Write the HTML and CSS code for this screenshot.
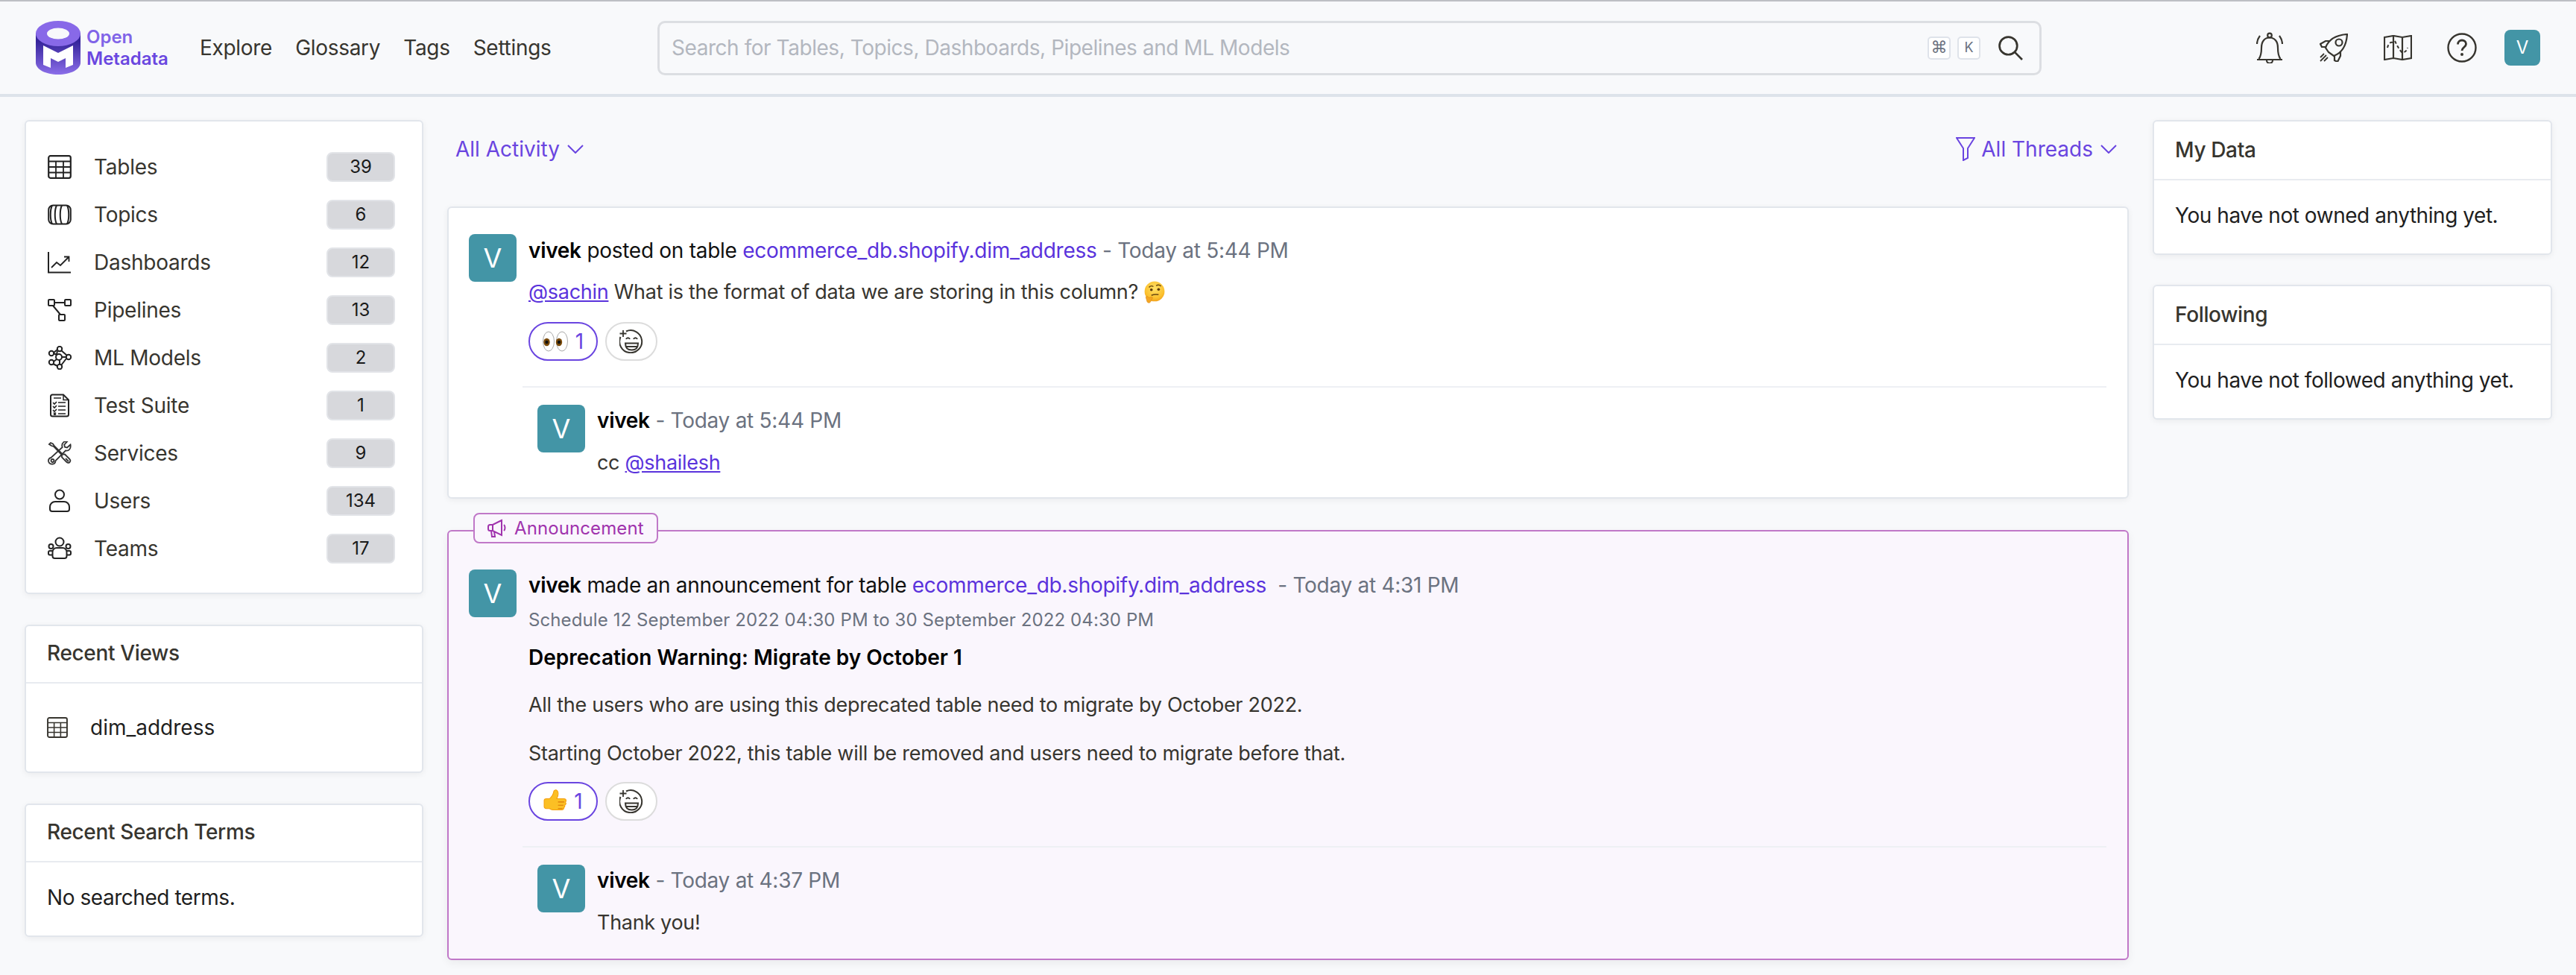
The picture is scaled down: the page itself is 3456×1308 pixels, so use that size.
FILE: index.html
```html
<!DOCTYPE html>
<html lang="en">
<head>
    <meta charset="UTF-8">
    <meta name="viewport" content="width=device-width, initial-scale=1.0">
    <title>OpenMetadata</title>
    <link rel="stylesheet" href="styles.css">
</head>
<body>
    <svg class="sprites" width="0" height="0" aria-hidden="true">
        <defs>
            <linearGradient id="logoBody" x1="0" y1="0" x2="0" y2="1">
                <stop offset="0.2" stop-color="#35249a"/>
                <stop offset="1" stop-color="#8b6ee9"/>
            </linearGradient>
            <radialGradient id="thinkFace" cx="0.5" cy="0.35" r="0.7">
                <stop offset="0" stop-color="#ffe066"/>
                <stop offset="0.7" stop-color="#fbc02d"/>
                <stop offset="1" stop-color="#ef9a1a"/>
            </radialGradient>
        </defs>
        <symbol id="i-table" viewBox="0 0 32 32">
            <rect x="1.2" y="1.2" width="29.6" height="29.6" rx="2.5" fill="none" stroke="currentColor" stroke-width="2.2"/>
            <path d="M1 8.5h30M1 16h30M1 23.5h30M11 8.5v22M21 8.5v22" fill="none" stroke="currentColor" stroke-width="1.8"/>
        </symbol>
        <symbol id="i-topic" viewBox="0 0 32 32">
            <rect x="1.2" y="3.5" width="29.6" height="25" rx="6" fill="none" stroke="currentColor" stroke-width="2"/>
            <path d="M6 3.5c-3 6-3 19 0 25M12 3.5c-3 6-3 19 0 25M19 3.5c-3 6-3 19 0 25M26 3.5c3 6 3 19 0 25" fill="none" stroke="currentColor" stroke-width="2"/>
        </symbol>
        <symbol id="i-dash" viewBox="0 0 32 32">
            <path d="M1 2v27.5h30" fill="none" stroke="currentColor" stroke-width="2"/>
            <path d="M5 23l7-7 5 4 11-11M22 8.5h6.5V15" fill="none" stroke="currentColor" stroke-width="1.8"/>
        </symbol>
        <symbol id="i-pipe" viewBox="0 0 32 32">
            <g fill="none" stroke="currentColor" stroke-width="2">
                <rect x="1" y="2" width="8" height="8" rx="1"/>
                <rect x="23" y="2" width="8" height="8" rx="1"/>
                <rect x="15" y="22" width="8" height="8" rx="1"/>
                <path d="M9 6h14M7 10l10 12"/>
            </g>
        </symbol>
        <symbol id="i-ml" viewBox="0 0 32 32">
            <g fill="none" stroke="currentColor" stroke-width="2">
                <circle cx="16" cy="4" r="3.2"/>
                <circle cx="5" cy="10" r="3.2"/>
                <circle cx="28" cy="15" r="3.2"/>
                <circle cx="5" cy="22" r="3.2"/>
                <circle cx="16" cy="28" r="3.2"/>
                <circle cx="15" cy="15" r="4"/>
                <path d="M8 10l4 2M18 6l8 7M18 15h7M8 21l4-3M16 25v-6M25 17l-7 9M13 7l-1 4M8 9l5-4M7 24l6 3"/>
            </g>
        </symbol>
        <symbol id="i-test" viewBox="0 0 32 32">
            <path d="M6 1.5h15l7 7V28a2.5 2.5 0 0 1-2.5 2.5h-19A2.5 2.5 0 0 1 4 28V4a2.5 2.5 0 0 1 2-2.5z" fill="none" stroke="currentColor" stroke-width="2"/>
            <path d="M21 1.5v7h7" fill="none" stroke="currentColor" stroke-width="1.5"/>
            <path d="M8 6h10M14 12h10M14 17h10M14 22h10M14 27h10M7 12l2 2 3-3M7 17l2 2 3-3M7 22l2 2 3-3M8 25.5l3 3M11 25.5l-3 3" fill="none" stroke="currentColor" stroke-width="1.6"/>
        </symbol>
        <symbol id="i-service" viewBox="0 0 32 32">
            <g fill="none" stroke="#333" stroke-width="1.8">
                <path d="M2 4l2-2 3 1.5 2 3 11 11 3 0 6 6c1.5 1.5 1.5 3.5.5 4.5s-3 1-4.5-.5l-6-6 0-3L8 7 5 6z"/>
                <path d="M24 23l4 4"/>
                <path d="M30.5 4.5l-4.5 4-3-.8-.8-3 4-4.5c-3.5-.8-7 1.5-7 5.5 0 1 .2 1.5.5 2.2L4.5 22c-3 .5-4 3-3.3 5.5 1 2.5 3.5 3.5 6 3 2-.5 3.300-2.5 3.300-4.5l13.5-13.5c4.5 1 7.5-3 6.5-8z"/>
                <circle cx="6.5" cy="26" r="2"/>
            </g>
        </symbol>
        <symbol id="i-user" viewBox="0 0 32 32">
            <circle cx="16" cy="7.5" r="6" fill="none" stroke="currentColor" stroke-width="2"/>
            <path d="M10 17h12a7 7 0 0 1 7 7v3a3 3 0 0 1-3 3H6a3 3 0 0 1-3-3v-3a7 7 0 0 1 7-7z" fill="none" stroke="currentColor" stroke-width="2"/>
        </symbol>
        <symbol id="i-team" viewBox="0 0 32 32">
            <g fill="none" stroke="currentColor" stroke-width="2">
                <circle cx="16" cy="7" r="5.5"/>
                <circle cx="4.5" cy="13" r="3"/>
                <circle cx="27.5" cy="13" r="3"/>
                <path d="M12 15h8a5.5 5.5 0 0 1 5.5 5.5V26a3 3 0 0 1-3 3h-13a3 3 0 0 1-3-3v-5.5A5.5 5.5 0 0 1 12 15z"/>
                <path d="M6.500 19H3a2 2 0 0 0-2 2v1.5a2 2 0 0 0 2 2h3.500M25.500 19H29a2 2 0 0 1 2 2v1.5a2 2 0 0 1-2 2h-3.500"/>
            </g>
        </symbol>
        <symbol id="i-addreact" viewBox="0 0 32 32">
            <g fill="none" stroke="#37352f" stroke-width="2">
                <path d="M9 2.5A15 15 0 1 1 1.5 10"/>
                <path d="M5 1v9M.5 5.5h9" stroke-width="1.8"/>
                <path d="M8 18.5h17c0 6-3.5 9-8.500 9S8 24.5 8 18.5zM8.500 23h16"/>
                <path d="M9 13c1-2.500 4-2.500 5 0M19 13c1-2.500 4-2.500 5 0"/>
            </g>
        </symbol>
    </svg>

    <header class="topbar">
        <div class="brand">
            <svg class="brand-logo" viewBox="0 0 60 72">
                <path d="M0 16V56C0 65 13 72 30 72S60 65 60 56V16Z" fill="url(#logoBody)"/>
                <ellipse cx="30" cy="17" rx="30" ry="17" fill="#8869e8"/>
                <ellipse cx="30" cy="17" rx="15" ry="7.5" fill="#f8f9fb"/>
                <path d="M10 33L30 43 50 33V59L40 63V50L30 55 20 50V63L10 59Z" fill="#fff"/>
            </svg>
            <div class="brand-name"><span class="brand-open">Open</span><span>Metadata</span></div>
        </div>
        <nav class="mainnav">
            <a>Explore</a>
            <a>Glossary</a>
            <a>Tags</a>
            <a>Settings</a>
        </nav>
        <div class="searchbox">
            <span class="search-hint">Search for Tables, Topics, Dashboards, Pipelines and ML Models</span>
            <kbd class="key key-cmd">⌘</kbd>
            <kbd class="key">K</kbd>
            <svg class="search-icon" viewBox="0 0 32 32"><circle cx="13" cy="13" r="11.5" fill="none" stroke="#37352f" stroke-width="2.6"/><path d="M21.5 21.5L31 31" stroke="#37352f" stroke-width="2.6"/></svg>
        </div>
        <div class="toolicons">
            <svg class="tool-bell" viewBox="0 0 36 42" fill="none" stroke="#37352f" stroke-width="2.2">
                <path d="M1 37h34M3.5 36c3-4 3.5-8 3.5-15C7 13 11 7.5 18 7.5S29 13 29 21c0 7 .5 11 3.5 15"/>
                <circle cx="18" cy="4.5" r="2.8"/>
                <path d="M14 38c0 5 8 5 8 0M1 16c0-4 1-7 4-11M35 16c0-4-1-7-4-11"/>
            </svg>
            <svg class="tool-rocket" viewBox="0 0 38 38" fill="none" stroke="#37352f" stroke-width="2.2">
                <path d="M12 25L8 19C12 8 22 2 37 1 36 16 30 26 19 30z"/>
                <circle cx="26" cy="12" r="4.5"/>
                <path d="M9 18H3L1 14 8 10 13 10M20 30v6L24 38 28 30V25"/>
                <path d="M1 37l8-8M6 37l5-5M1 32l5-5" stroke-width="1.8"/>
            </svg>
            <svg class="tool-map" viewBox="0 0 38 34" fill="none" stroke="#37352f" stroke-width="2.2">
                <path d="M1 3L13 1 25 3 37 1V31L25 33 13 31 1 33ZM13 1V31M25 3V33"/>
                <path d="M5 17c1-5 4-8 7-7M15 8l3 6 3 5 3 4c3 1 7-1 8-6" stroke-width="2" stroke-dasharray="4 3"/>
            </svg>
            <svg class="tool-help" viewBox="0 0 40 40">
                <circle cx="20" cy="20" r="18.5" fill="none" stroke="#37352f" stroke-width="2.4"/>
                <path d="M14.5 15.5c0-3.500 2.5-5.500 5.500-5.500s5.500 2 5.500 5c0 4-5.500 4.500-5.500 9" fill="none" stroke="#37352f" stroke-width="2.8"/>
                <circle cx="20" cy="29" r="2" fill="#37352f"/>
            </svg>
            <span class="avatar avatar-small">V</span>
        </div>
    </header>

    <main class="layout">
        <aside class="col-left">
            <section class="card stats">
                <div class="stat"><svg class="stat-icon"><use href="#i-table"/></svg><span class="stat-name">Tables</span><span class="count">39</span></div>
                <div class="stat"><svg class="stat-icon"><use href="#i-topic"/></svg><span class="stat-name">Topics</span><span class="count">6</span></div>
                <div class="stat"><svg class="stat-icon"><use href="#i-dash"/></svg><span class="stat-name">Dashboards</span><span class="count">12</span></div>
                <div class="stat"><svg class="stat-icon"><use href="#i-pipe"/></svg><span class="stat-name">Pipelines</span><span class="count">13</span></div>
                <div class="stat"><svg class="stat-icon"><use href="#i-ml"/></svg><span class="stat-name">ML Models</span><span class="count">2</span></div>
                <div class="stat"><svg class="stat-icon"><use href="#i-test"/></svg><span class="stat-name">Test Suite</span><span class="count">1</span></div>
                <div class="stat"><svg class="stat-icon"><use href="#i-service"/></svg><span class="stat-name">Services</span><span class="count">9</span></div>
                <div class="stat"><svg class="stat-icon"><use href="#i-user"/></svg><span class="stat-name">Users</span><span class="count">134</span></div>
                <div class="stat"><svg class="stat-icon"><use href="#i-team"/></svg><span class="stat-name">Teams</span><span class="count">17</span></div>
            </section>
            <section class="card">
                <h3 class="card-title">Recent Views</h3>
                <div class="card-body recent-item"><svg class="recent-icon"><use href="#i-table"/></svg>dim_address</div>
            </section>
            <section class="card">
                <h3 class="card-title">Recent Search Terms</h3>
                <div class="card-body">No searched terms.</div>
            </section>
        </aside>

        <div class="col-feed">
            <div class="feed-filters">
                <a class="filter">All Activity <svg class="chevron" viewBox="0 0 22 12"><path d="M1 1l10 10L21 1" fill="none" stroke="currentColor" stroke-width="2"/></svg></a>
                <a class="filter">
                    <svg class="funnel" viewBox="0 0 26 32"><path d="M1 1h24L16 15v13l-6 3V15z" fill="none" stroke="currentColor" stroke-width="2"/></svg>
                    All Threads <svg class="chevron" viewBox="0 0 22 12"><path d="M1 1l10 10L21 1" fill="none" stroke="currentColor" stroke-width="2"/></svg>
                </a>
            </div>

            <article class="post">
                <span class="avatar">V</span>
                <div class="post-main">
                    <p class="post-title"><b>vivek</b> posted on table <a class="link">ecommerce_db.shopify.dim_address</a> <span class="muted">- Today at 5:44 PM</span></p>
                    <p class="post-text post-gap"><a class="mention">@sachin</a> What is the format of data we are storing in this column?
                        <svg class="emoji-think" viewBox="0 0 28 28">
                            <circle cx="14" cy="13" r="12.5" fill="url(#thinkFace)"/>
                            <path d="M7 8c1.5-2 4-2 5.5-1M16 6c2-1.5 4.5-1 6 .5" fill="none" stroke="#6b4a10" stroke-width="1.4"/>
                            <circle cx="10" cy="11" r="1.7" fill="#5b3a0c"/>
                            <circle cx="19" cy="10.5" r="1.7" fill="#5b3a0c"/>
                            <path d="M10 18c3-1.5 6-1.5 9-1" fill="none" stroke="#6b4a10" stroke-width="1.4"/>
                            <path d="M3 20c2-1.5 3 0 4 1l3-1c2 0 2 2 .5 2.5L9 26c-1 2-4 1.5-4.5-.5z" fill="#f5a623" stroke="#d98a13" stroke-width=".6"/>
                        </svg>
                    </p>
                    <div class="reactions">
                        <span class="reaction">
                            <svg class="emoji-eyes" viewBox="0 0 34 28">
                                <ellipse cx="8" cy="14" rx="7.5" ry="13" fill="#fff" stroke="#aaa" stroke-width="1"/>
                                <ellipse cx="26" cy="14" rx="7.5" ry="13" fill="#fff" stroke="#aaa" stroke-width="1"/>
                                <ellipse cx="5.5" cy="15" rx="4.2" ry="5.2" fill="#7a4a0a"/>
                                <ellipse cx="22" cy="15" rx="4.2" ry="5.2" fill="#7a4a0a"/>
                                <circle cx="5.5" cy="15" r="2.2" fill="#111"/>
                                <circle cx="22" cy="15" r="2.2" fill="#111"/>
                            </svg>
                            1
                        </span>
                        <span class="reaction-add"><svg class="addreact-icon"><use href="#i-addreact"/></svg></span>
                    </div>
                    <div class="reply">
                        <span class="avatar">V</span>
                        <div>
                            <p class="reply-title"><b>vivek</b> <span class="muted">- Today at 5:44 PM</span></p>
                            <p class="reply-text">cc <a class="mention">@shailesh</a></p>
                        </div>
                    </div>
                </div>
            </article>

            <article class="post post-announce">
                <span class="announce-tag">
                    <svg class="announce-icon" viewBox="0 0 26 26" fill="none" stroke="currentColor" stroke-width="2">
                        <path d="M19 2L7 8H3.5C2 8 1 9 1 10.5v3C1 15 2 16 3.5 16H7l12 6zM7 8v8M22 8c2 1.5 2 6.5 0 8M5 16l1 8h4l-1-7"/>
                    </svg>
                    Announcement
                </span>
                <span class="avatar">V</span>
                <div class="post-main">
                    <p class="post-title"><b>vivek</b> made an announcement for table <a class="link">ecommerce_db.shopify.dim_address</a> &nbsp;<span class="muted">- Today at 4:31 PM</span></p>
                    <p class="schedule">Schedule 12 September 2022 04:30 PM to 30 September 2022 04:30 PM</p>
                    <p class="announce-head">Deprecation Warning: Migrate by October 1</p>
                    <p class="post-text announce-p1">All the users who are using this deprecated table need to migrate by October 2022.</p>
                    <p class="post-text announce-p2">Starting October 2022, this table will be removed and users need to migrate before that.</p>
                    <div class="reactions reactions-tight">
                        <span class="reaction">
                            <svg class="emoji-thumb" viewBox="0 0 30 36" preserveAspectRatio="none">
                                <path d="M1 17c0-2 1.5-3 3-3h4c3-3 5-7 5.5-11 .2-2 3-3 4.5-1s1.5 7-.5 12h9c2 0 3 1.5 3 3 0 1-.5 2-1 2.5.8.7 1 2 .5 3s-1 1.5-1.5 1.8c.5 1 .3 2.5-1 3.2.5 1.5-.5 3.5-3 3.5H13c-2 0-3.5-1-5-2H4c-2 0-3-1-3-3z" fill="#fbbf24" stroke="#f59e0b" stroke-width="1"/>
                                <path d="M19 19h8M19 24h7M19 29h6" stroke="#d97706" stroke-width="1.2"/>
                            </svg>
                            1
                        </span>
                        <span class="reaction-add"><svg class="addreact-icon"><use href="#i-addreact"/></svg></span>
                    </div>
                    <div class="reply">
                        <span class="avatar">V</span>
                        <div>
                            <p class="reply-title"><b>vivek</b> <span class="muted">- Today at 4:37 PM</span></p>
                            <p class="reply-text">Thank you!</p>
                        </div>
                    </div>
                </div>
            </article>
        </div>

        <aside class="col-right">
            <section class="card">
                <h3 class="card-title card-title-tall">My Data</h3>
                <div class="card-body">You have not owned anything yet.</div>
            </section>
            <section class="card">
                <h3 class="card-title card-title-tall">Following</h3>
                <div class="card-body">You have not followed anything yet.</div>
            </section>
        </aside>
    </main>
</body>
</html>
```

FILE: styles.css
```css
* {
    box-sizing: border-box;
}
body {
    margin: 0;
    background-color: #f8f9fb;
    color: #37352f;
    font-family: Inter, "Liberation Sans", sans-serif;
    font-size: 28px;
    line-height: 44px;
}
p, h3 {
    margin: 0;
}
.sprites {
    position: absolute;
}

/* top bar */
.topbar {
    display: flex;
    align-items: center;
    height: 130px;
    padding: 0 48px;
    border-top: 2px solid #bdbfc4;
    border-bottom: 4px solid #dde3ea;
}
.brand {
    display: flex;
    align-items: center;
    gap: 8px;
    flex: none;
    width: 220px;
}
.brand-logo {
    width: 60px;
    height: 72px;
    flex: none;
}
.brand-name {
    display: flex;
    flex-direction: column;
    color: #6a47e0;
    font-size: 24px;
    font-weight: 600;
    line-height: 29px;
}
.brand-open {
    color: #8064e8;
}
.mainnav {
    display: flex;
    flex: none;
    gap: 31px;
    width: 614px;
    letter-spacing: -0.3px;
}
.searchbox {
    display: flex;
    align-items: center;
    flex: none;
    width: 1857px;
    height: 73px;
    padding: 0 22px 0 16px;
    border: 3px solid #dcdee2;
    border-radius: 10px;
}
.search-hint {
    flex: 1;
    color: #b3b7bf;
    letter-spacing: -0.45px;
}
.key {
    display: flex;
    align-items: center;
    justify-content: center;
    width: 31px;
    height: 31px;
    margin-left: 9px;
    border: 2px solid #dfe3ea;
    border-radius: 5px;
    background: #fff;
    color: #6b7280;
    font-family: Inter, sans-serif;
    font-size: 18px;
    line-height: 1;
}
.key-cmd {
    font-family: "DejaVu Sans", sans-serif;
    font-size: 22px;
}
.search-icon {
    width: 33px;
    height: 33px;
    margin-left: 24px;
}
.toolicons {
    display: flex;
    align-items: center;
    margin-left: 288px;
}
.tool-bell {
    width: 36px;
    height: 42px;
}
.tool-rocket {
    width: 38px;
    height: 38px;
    margin-left: 49px;
}
.tool-map {
    width: 38px;
    height: 34px;
    margin-left: 48px;
}
.tool-help {
    width: 40px;
    height: 40px;
    margin-left: 47px;
}
.avatar {
    display: flex;
    align-items: center;
    justify-content: center;
    flex: none;
    width: 64px;
    height: 64px;
    border-radius: 8px;
    background-color: #4395a6;
    color: #fff;
    font-size: 36px;
}
.avatar-small {
    width: 48px;
    height: 48px;
    margin-left: 37px;
    font-size: 24px;
}

/* page columns */
.layout {
    display: grid;
    grid-template-columns: 535px 2256px 536px;
    column-gap: 32px;
    align-items: start;
    padding: 31px 32px 20px 33px;
}
.col-left {
    display: flex;
    flex-direction: column;
    gap: 41px;
}
.col-right {
    display: flex;
    flex-direction: column;
    gap: 40px;
}
.card {
    border: 2px solid #e2e6ec;
    border-radius: 6px;
    background: #fff;
    box-shadow: 0 2px 8px rgba(0, 0, 0, 0.06);
}
.card-title {
    height: 77px;
    padding: 0 28px;
    border-bottom: 2px solid #e8ebf0;
    font-size: 28px;
    font-weight: 500;
    line-height: 73px;
    letter-spacing: -0.35px;
}
.card-title-tall {
    height: 79px;
    line-height: 77px;
}
.card-body {
    height: 98px;
    padding: 0 28px;
    color: #1f1f1f;
    line-height: 94px;
    letter-spacing: -0.45px;
}
.recent-item {
    display: flex;
    align-items: center;
    height: 118px;
    line-height: 44px;
    letter-spacing: 0;
}
.recent-icon {
    width: 28px;
    height: 28px;
    margin-right: 30px;
    color: #37352f;
}

/* stat list */
.stats {
    padding: 29px 36px 27px 29px;
}
.stat {
    display: flex;
    align-items: center;
    height: 64px;
}
.stat-icon {
    width: 32px;
    height: 32px;
    color: #222;
}
.stat-name {
    flex: 1;
    margin-left: 30px;
    letter-spacing: -0.25px;
}
.count {
    width: 92px;
    height: 40px;
    border: 2px solid #e2e4e8;
    border-radius: 8px;
    background-color: #d7d8dc;
    color: #1a1a1a;
    font-size: 24px;
    line-height: 36px;
    text-align: center;
}

/* feed */
.feed-filters {
    display: flex;
    justify-content: space-between;
    height: 116px;
    padding: 17px 16px 0 11px;
}
.filter {
    display: flex;
    align-items: center;
    gap: 10px;
    height: 44px;
    color: #6a45e0;
}
.chevron {
    width: 22px;
    height: 12px;
}
.funnel {
    width: 26px;
    height: 32px;
    margin-right: -2px;
}
.post {
    display: flex;
    gap: 16px;
    padding: 35px 28px 24px 27px;
    border: 2px solid #e2e6ec;
    border-radius: 6px;
    background: #fff;
    box-shadow: 0 2px 8px rgba(0, 0, 0, 0.06);
}
.post-announce {
    position: relative;
    margin-top: 42px;
    padding-top: 51px;
    padding-bottom: 26px;
    border-color: #c078c8;
    background: #faf6fd;
    box-shadow: 0 4px 12px rgba(0, 0, 0, 0.06);
}
.post-main {
    flex: 1;
}
.post-title {
    height: 44px;
    color: #111;
    letter-spacing: -0.28px;
}
.post-announce .post-title {
    line-height: 42px;
}
.post-title b, .reply-title b {
    color: #000;
    font-weight: 600;
}
.post-text {
    font-size: 27px;
    letter-spacing: -0.28px;
}
.post-gap {
    margin-top: 12px;
}
.link {
    color: #5a33dc;
}
.mention {
    color: #5a33dc;
    text-decoration: underline;
}
.muted {
    color: #6b7280;
}
.emoji-think {
    width: 30px;
    height: 30px;
    vertical-align: -6px;
}
.reactions {
    display: flex;
    gap: 10px;
    margin-top: 18px;
}
.reactions-tight {
    margin-top: 16px;
}
.reaction {
    display: flex;
    align-items: center;
    justify-content: center;
    gap: 10px;
    width: 93px;
    height: 52px;
    border: 2px solid #6a45e0;
    border-radius: 26px;
    background: #fff;
    color: #6a45e0;
}
.emoji-eyes {
    width: 34px;
    height: 28px;
}
.emoji-thumb {
    width: 31px;
    height: 32px;
}
.reaction-add {
    display: flex;
    align-items: center;
    justify-content: center;
    width: 70px;
    height: 52px;
    border: 2px solid #dcdcdc;
    border-radius: 26px;
    background: #fff;
}
.addreact-icon {
    width: 32px;
    height: 32px;
}
.reply {
    display: flex;
    gap: 16px;
    margin: 34px 0 0 -8px;
    padding: 23px 0 0 20px;
    border-top: 2px solid #eef0f4;
}
.reply-title {
    height: 43px;
    line-height: 43px;
    letter-spacing: -0.28px;
}
.reply-text {
    margin-top: 13px;
    font-size: 27px;
    letter-spacing: -0.3px;
}

/* announcement card */
.announce-tag {
    position: absolute;
    top: -25px;
    left: 33px;
    display: flex;
    align-items: center;
    gap: 10px;
    width: 248px;
    height: 41px;
    padding-left: 17px;
    border: 2px solid #c078c8;
    border-radius: 8px;
    background: #faf6fd;
    color: #a033ad;
    font-size: 24px;
    letter-spacing: 0.1px;
}
.announce-icon {
    width: 26px;
    height: 26px;
}
.schedule {
    margin-top: 6px;
    color: #6b7280;
    font-size: 24px;
    line-height: 36px;
    letter-spacing: 0.1px;
}
.announce-head {
    margin-top: 9px;
    color: #000;
    font-weight: 600;
    line-height: 46px;
}
.announce-p1 {
    margin-top: 19px;
}
.announce-p2 {
    margin-top: 21px;
}
```
